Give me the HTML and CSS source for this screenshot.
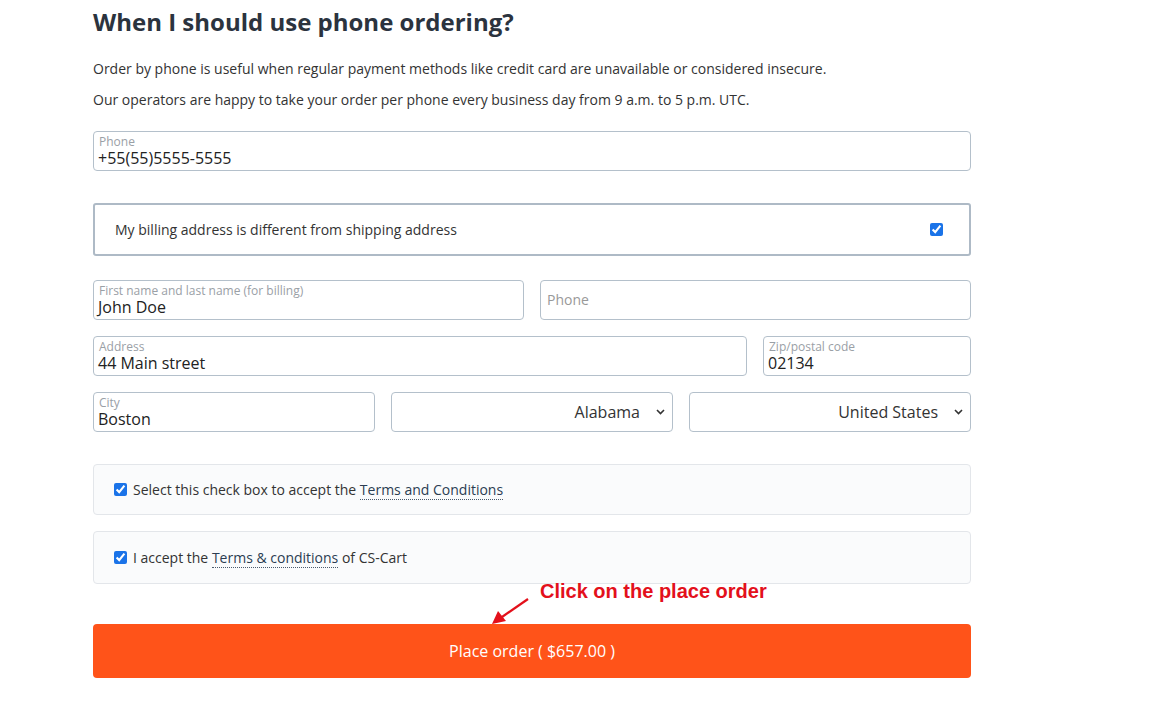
FILE: index.html
```html
<!DOCTYPE html>
<html>
<head>
<meta charset="utf-8">
<link rel="stylesheet" href="styles.css">
</head>
<body>
<main class="page">
  <h2 class="title">When I should use phone ordering?</h2>
  <p class="text">Order by phone is useful when regular payment methods like credit card are unavailable or considered insecure.</p>
  <p class="text text-2">Our operators are happy to take your order per phone every business day from 9 a.m. to 5 p.m. UTC.</p>

  <div class="field full">
    <span class="label">Phone</span>
    <span class="value">+55(55)5555-5555</span>
  </div>

  <div class="billing">
    <span class="billing-text">My billing address is different from shipping address</span>
    <input type="checkbox" class="check" checked>
  </div>

  <div class="row row-1">
    <div class="field half">
      <span class="label">First name and last name (for billing)</span>
      <span class="value">John Doe</span>
    </div>
    <div class="field half placeholder">
      <span class="ph">Phone</span>
    </div>
  </div>

  <div class="row">
    <div class="field address">
      <span class="label">Address</span>
      <span class="value">44 Main street</span>
    </div>
    <div class="field zip">
      <span class="label">Zip/postal code</span>
      <span class="value">02134</span>
    </div>
  </div>

  <div class="row">
    <div class="field third">
      <span class="label">City</span>
      <span class="value">Boston</span>
    </div>
    <div class="field third select">
      <span class="sel-text">Alabama</span>
      <svg class="chev" width="9" height="6" viewBox="0 0 9 6"><path d="M1 1 L4.5 4.5 L8 1" fill="none" stroke="#333" stroke-width="1.6"/></svg>
    </div>
    <div class="field third select">
      <span class="sel-text">United States</span>
      <svg class="chev" width="9" height="6" viewBox="0 0 9 6"><path d="M1 1 L4.5 4.5 L8 1" fill="none" stroke="#333" stroke-width="1.6"/></svg>
    </div>
  </div>

  <div class="terms terms-1">
    <input type="checkbox" class="check-sm" checked>
    <span>Select this check box to accept the <a class="link">Terms and Conditions</a></span>
  </div>
  <div class="terms terms-2">
    <input type="checkbox" class="check-sm" checked>
    <span>I accept the <a class="link">Terms &amp; conditions</a> of CS-Cart</span>
  </div>

  <div class="submit-wrap">
    <div class="annotation">Click on the place order</div>
    <svg class="arrow" width="44" height="32" viewBox="0 0 44 32">
      <line x1="38" y1="2" x2="12" y2="20" stroke="#e3101b" stroke-width="2.2"/>
      <polygon points="2,27 8,14 16,24" fill="#e3101b"/>
    </svg>
    <button class="place">Place order ( $657.00 )</button>
  </div>
</main>
</body>
</html>
```

FILE: styles.css
```css
* { box-sizing: border-box; }
html, body { margin: 0; padding: 0; background: #fff; }
body {
  font-family: "Open Sans", "Noto Sans", sans-serif;
  color: #333;
  width: 1167px;
  height: 718px;
  overflow: hidden;
}
.page {
  width: 878px;
  margin-left: 93px;
  padding-top: 6px;
}
.title {
  margin: 0;
  font-size: 24px;
  font-weight: 700;
  color: #2b333e;
  line-height: 32px;
}
.text {
  margin: 21px 0 0;
  font-size: 14px;
  line-height: 20px;
  color: #333;
}
.text-2 { margin-top: 11px; }

.field {
  position: relative;
  height: 40px;
  border: 1px solid #b4c0cb;
  border-radius: 4px;
  background: #fff;
  padding: 3px 5px 0 4px;
  display: flex;
  flex-direction: column;
}
.full { margin-top: 21px; }
.label {
  font-size: 12px;
  line-height: 13px;
  color: #9aa0a6;
  padding-left: 1px;
}
.value {
  font-size: 16px;
  line-height: 20px;
  color: #222;
}
.placeholder { justify-content: center; padding-left: 6px; padding-top: 0; padding-bottom: 1px; }
.ph { font-size: 14px; color: #999; }

.billing {
  margin-top: 32px;
  height: 53px;
  border: 2px solid #aebac6;
  border-radius: 3px;
  display: flex;
  align-items: center;
  padding: 0 26px 0 20px;
  justify-content: space-between;
}
.billing-text {
  font-size: 14px;
  color: #333;
}
.check {
  width: 13px; height: 13px; margin: 0;
  accent-color: #1a73e8;
}

.row {
  display: flex;
  gap: 16px;
  margin-top: 16px;
}
.row-1 { margin-top: 24px; }
.half { width: 431px; flex: none; }
.address { width: 654px; flex: none; }
.zip { width: 208px; flex: none; }
.third { width: 282px; flex: none; }
.select {
  flex-direction: row;
  align-items: center;
  justify-content: flex-end;
  padding: 0 7px 0 10px;
}
.sel-text {
  font-size: 16px;
  color: #333;
  margin-right: 16px;
}
.chev { display: block; }

.terms {
  background: #fafbfc;
  border: 1px solid #e3e6ea;
  border-radius: 4px;
  display: flex;
  align-items: center;
  padding-left: 20px;
  font-size: 14px;
  color: #333;
}
.terms-1 { margin-top: 32px; height: 51px; }
.terms-2 { margin-top: 16px; height: 53px; }
.check-sm {
  width: 13px; height: 13px; margin: 0 6px 0 0;
  accent-color: #1a73e8;
}
.link {
  color: #2b3d52;
  text-decoration: none;
  border-bottom: 1px dotted #4a5a6c;
}

.submit-wrap {
  position: relative;
  padding-top: 40px;
}
.annotation {
  position: absolute;
  left: 447px;
  top: -4px;
  font-family: "Liberation Sans", Arial, sans-serif;
  font-weight: 700;
  font-size: 20px;
  color: #e3101b;
  white-space: nowrap;
}
.arrow {
  position: absolute;
  left: 397px;
  top: 13px;
}
.place {
  display: block;
  width: 100%;
  height: 54px;
  border: 0;
  border-radius: 4px;
  background: #ff5319;
  color: #fff;
  font-family: "Open Sans", sans-serif;
  font-size: 16px;
  padding: 0;
}
```
